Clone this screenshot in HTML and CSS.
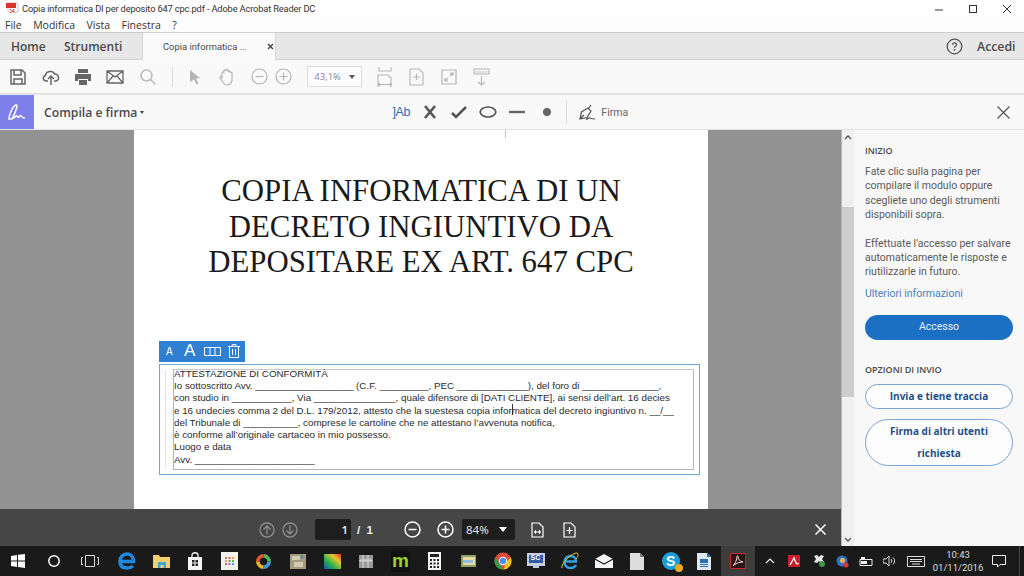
FILE: index.html
```html
<!DOCTYPE html>
<html lang="it">
<head>
<meta charset="utf-8">
<title>Copia informatica DI per deposito 647 cpc.pdf - Adobe Acrobat Reader DC</title>
<link rel="stylesheet" href="styles.css">
</head>
<body>
<div class="app">
  <header class="titlebar">
    <svg class="title-icon" width="14" height="14" viewBox="0 0 14 14"><path d="M2 0h8l2 2v8H2z" fill="#fff" stroke="#c9c9c9"/><path d="M0 1h10v5H0z" fill="#d8342a"/><path d="M4 7c2 1 3 3 5 3M8 7c-1 2-2 3-4 4" stroke="#d8342a" fill="none"/></svg>
    <span class="title-text">Copia informatica DI per deposito 647 cpc.pdf - Adobe Acrobat Reader DC</span>
    <div class="winbtns">
      <svg width="10" height="10" viewBox="0 0 10 10"><path d="M1 6h8" stroke="#333" stroke-width="1"/></svg>
      <svg width="10" height="10" viewBox="0 0 10 10"><rect x="1.5" y="1.5" width="7" height="7" fill="none" stroke="#333"/></svg>
      <svg width="10" height="10" viewBox="0 0 10 10"><path d="M1 1l8 8M9 1l-8 8" stroke="#333" stroke-width="1"/></svg>
    </div>
  </header>
  <nav class="menubar"><span>File</span><span>Modifica</span><span>Vista</span><span>Finestra</span><span>?</span></nav>
  <div class="tabs">
    <span class="tab-home">Home</span>
    <span class="tab-tools">Strumenti</span>
    <div class="tab-doc"><span>Copia informatica ...</span><svg width="7" height="7" viewBox="0 0 7 7"><path d="M1 1l5 5M6 1l-5 5" stroke="#444" stroke-width="1.4"/></svg></div>
    <svg class="help" width="17" height="17" viewBox="0 0 17 17"><circle cx="8.5" cy="8.5" r="7.3" fill="none" stroke="#555" stroke-width="1.3"/><path d="M6.6 6.8c0-2.5 3.9-2.5 3.9-.1 0 1.5-2 1.5-2 3" fill="none" stroke="#555" stroke-width="1.3"/><circle cx="8.5" cy="11.8" r=".9" fill="#555"/></svg>
    <span class="accedi">Accedi</span>
  </div>
  <div class="toolbar">
    <div class="tool"><svg width="18" height="18" viewBox="0 0 18 18" fill="none" stroke="#666" stroke-width="1.5"><path d="M2 2h11l3 3v11H2z"/><path d="M5 2v5h7V2M5 16v-5h8v5"/></svg></div>
    <div class="tool"><svg width="18" height="18" viewBox="0 0 18 18" fill="none" stroke="#666" stroke-width="1.5"><path d="M6 13H4.500C1 13 0 8.500 3.500 7.500 4 3 11 2 12.500 6c4-.5 6 6 1.500 7h-2"/><path d="M9 17V8M6 11l3-3 3 3"/></svg></div>
    <div class="tool"><svg width="18" height="18" viewBox="0 0 18 18"><path d="M4 1h10v4H4zM1 6h16v7h-3v-2H4v2H1zM5 12h8v5H5z" fill="#666"/></svg></div>
    <div class="tool"><svg width="18" height="14" viewBox="0 0 18 14" fill="none" stroke="#666" stroke-width="1.3"><path d="M1 1h16v12H1zM1 1l8 6 8-6M1 13l6-7M17 13l-6-7"/></svg></div>
    <div class="tool"><svg width="18" height="18" viewBox="0 0 18 18" fill="none" stroke="#bdbdbd" stroke-width="1.5"><circle cx="7.500" cy="7.500" r="5.500"/><path d="M11.500 11.500l5 5"/></svg></div>
    <div class="sep"></div>
    <div class="tool tool-a"><svg width="12" height="16" viewBox="0 0 12 16"><path d="M1 1l10 8-4 .5 2.500 5-2 1-2.500-5L1 13z" fill="#b5b5b5"/></svg></div>
    <div class="tool"><svg width="18" height="18" viewBox="0 0 18 18" fill="none" stroke="#b5b5b5" stroke-width="1.200"><path d="M4 11V5c0-1.500 2-1.500 2 0V3c0-1.500 2-1.500 2 0v-.500c0-1.500 2-1.500 2 0V4c0-1.500 2-1.500 2 0v1c0-1.200 2-1.200 2 0v6c0 4-2 6-5 6-2 0-3-1-4-2.500L2 10c-.800-1.500 1-2.500 2-1"/></svg></div>
    <div class="tool tool-z tool-z1"><svg width="17" height="17" viewBox="0 0 17 17" fill="none" stroke="#b5b5b5" stroke-width="1.200"><circle cx="8.500" cy="8.500" r="7.500"/><path d="M4.500 8.500h8"/></svg></div>
    <div class="tool tool-z"><svg width="17" height="17" viewBox="0 0 17 17" fill="none" stroke="#b5b5b5" stroke-width="1.200"><circle cx="8.500" cy="8.500" r="7.500"/><path d="M4.500 8.500h8M8.500 4.500v8"/></svg></div>
    <div class="zoombox"><span>43,1%</span><i class="caret"></i></div>
    <div class="tool tool-b"><svg width="16" height="20" viewBox="0 0 16 20" fill="none" stroke="#b5b5b5" stroke-width="1.100"><path d="M2 0v4h12V0M1 20v-12h10l3 3v9M3 16l-1.500 1.500L3 19M13 16l1.500 1.500L13 19M2 17.500h12"/></svg></div>
    <div class="tool"><svg width="15" height="18" viewBox="0 0 15 18" fill="none" stroke="#b5b5b5" stroke-width="1.100"><path d="M1 1h9l4 4v12H1z"/><path d="M4 9h7M7.500 6v6"/></svg></div>
    <div class="tool"><svg width="16" height="16" viewBox="0 0 16 16" fill="none" stroke="#b5b5b5" stroke-width="1.200"><path d="M1 1h14v14H1zM4 12l3-3M4 9v3h3M12 4L9 7M9 4h3v3"/></svg></div>
    <div class="tool"><svg width="17" height="18" viewBox="0 0 17 18" fill="none" stroke="#b5b5b5" stroke-width="1.100"><path d="M1 1h15v5H1zM4 3v2M7 3v2M10 3v2M13 3v2M8.500 8v9M5 14l3.500 3 3.500-3"/></svg></div>
  </div>
  <div class="fillbar">
    <div class="fill-badge"><svg width="20" height="18" viewBox="0 0 20 18" fill="none" stroke="#fff" stroke-width="1.500"><path d="M2 16c0-5 4-13 7-14 2-.500 1 4-4 14l-3 0zM6 15c2 0 3-3 4-2s1 2 2 1 1-2 2-1 1 2 4 2"/></svg></div>
    <span class="fill-name">Compila e firma</span><i class="mini-caret"></i>
    <div class="fill-tools">
      <span class="ab"><b>]</b>Ab</span>
      <span class="ft"><svg width="14" height="14" viewBox="0 0 14 14"><path d="M2 1l10 12M12 1L2 13" stroke="#555" stroke-width="2.600"/></svg></span>
      <span class="ft"><svg width="16" height="14" viewBox="0 0 16 14"><path d="M1 8l4 4L15 2" fill="none" stroke="#555" stroke-width="2.600"/></svg></span>
      <span class="ft"><svg width="18" height="12" viewBox="0 0 18 12"><ellipse cx="9" cy="6" rx="7.800" ry="5" fill="none" stroke="#555" stroke-width="1.700"/></svg></span>
      <span class="ft"><svg width="16" height="4" viewBox="0 0 16 4"><path d="M0 2h16" stroke="#666" stroke-width="2.400"/></svg></span>
      <span class="ft"><svg width="10" height="10" viewBox="0 0 10 10"><circle cx="5" cy="5" r="4" fill="#666"/></svg></span>
      <div class="sep sep-fill"></div>
      <svg width="18" height="17" viewBox="0 0 18 17" fill="none" stroke="#555" stroke-width="1.200"><path d="M2 15l1.500-7L10 4l3 3-4 6.500zM2 15l4-4M11 4l2-3M8 15c2 1 2-2 4-1s2 1 5 1"/></svg>
      <span class="firma">Firma</span>
    </div>
    <svg class="fill-close" width="13" height="13" viewBox="0 0 13 13"><path d="M.5.5l12 12M12.500.5l-12 12" stroke="#555" stroke-width="1.200"/></svg>
  </div>
  <main class="main">
    <section class="doc">
      <article class="page">
        <div class="page-tick"></div>
        <h1 class="doc-title">COPIA INFORMATICA DI UN<br>DECRETO INGIUNTIVO DA<br>DEPOSITARE EX ART. 647 CPC</h1>
        <div class="field-tools">
          <span class="ft-small">A</span><span class="ft-big">A</span>
          <svg width="17" height="9" viewBox="0 0 17 9" fill="none" stroke="#fff"><path d="M.5.500h16v8H.5zM6 .500v8M11 .500v8"/></svg>
          <svg width="12" height="14" viewBox="0 0 12 14" fill="none" stroke="#fff"><path d="M0 2.500h12M4 2.500V.700h4v1.800M1.500 2.500v11h9v-11M4.500 5v6M7.500 5v6"/></svg>
        </div>
        <div class="field">
          <div class="field-inner"><div class="field-text">ATTESTAZIONE DI CONFORMITÀ<br>Io sottoscritto Avv. __________________ (C.F. _________, PEC _____________), del foro di ______________,<br>con studio in ___________, Via _______________, quale difensore di [DATI CLIENTE], ai sensi dell’art. 16 decies<br>e 16 undecies comma 2 del D.L. 179/2012, attesto che la suestesa copia infor<span class="caretmark"></span>matica del decreto ingiuntivo n. __/__<br>del Tribunale di __________, comprese le cartoline che ne attestano l’avvenuta notifica,<br>è conforme all’originale cartaceo in mio possesso.<br>Luogo e data<br>Avv. ______________________</div></div>
        </div>
      </article>
      <div class="docbar">
        <svg class="nav-ic" width="16" height="16" viewBox="0 0 16 16" fill="none" stroke="#8d8d8d" stroke-width="1.300"><circle cx="8" cy="8" r="7"/><path d="M8 12.500V4M4.500 7.500L8 4l3.500 3.500"/></svg>
        <svg class="nav-ic nav-down" width="16" height="16" viewBox="0 0 16 16" fill="none" stroke="#8d8d8d" stroke-width="1.300"><circle cx="8" cy="8" r="7"/><path d="M8 3.500V12M4.500 8.500L8 12l3.500-3.500"/></svg>
        <div class="pagebox">1</div>
        <span class="pagecount">/ &nbsp;1</span>
        <svg class="z-minus" width="17" height="17" viewBox="0 0 17 17" fill="none" stroke="#fff" stroke-width="1.500"><circle cx="8.500" cy="8.500" r="7.500"/><path d="M4.500 8.500h8"/></svg>
        <svg class="z-plus" width="17" height="17" viewBox="0 0 17 17" fill="none" stroke="#fff" stroke-width="1.500"><circle cx="8.500" cy="8.500" r="7.500"/><path d="M4.500 8.500h8M8.500 4.500v8"/></svg>
        <div class="zoomdark"><span>84%</span><i class="caret caret-w"></i></div>
        <svg class="fit1" width="13" height="16" viewBox="0 0 13 16" fill="none" stroke="#fff" stroke-width="1.200"><path d="M1 1h7l4 4v10H1zM3.500 10h6M3.500 10l1.500-1.500M3.500 10l1.500 1.500M9.500 10L8 8.500M9.500 10L8 11.500"/></svg>
        <svg class="fit2" width="13" height="16" viewBox="0 0 13 16" fill="none" stroke="#fff" stroke-width="1.200"><path d="M1 1h7l4 4v10H1zM6.500 5v7M3.500 8.500h6"/></svg>
        <svg class="bar-close" width="11" height="11" viewBox="0 0 11 11"><path d="M.5.500l10 10M10.500.500l-10 10" stroke="#fff" stroke-width="1.500"/></svg>
      </div>
    </section>
    <div class="scroll">
      <svg class="sc-arrow" width="8" height="5" viewBox="0 0 8 5"><path d="M1 4l3-3 3 3" fill="none" stroke="#555" stroke-width="1.300"/></svg>
      <div class="sc-thumb"></div>
      <svg class="sc-arrow sc-bottom" width="8" height="5" viewBox="0 0 8 5"><path d="M1 1l3 3 3-3" fill="none" stroke="#555" stroke-width="1.300"/></svg>
    </div>
    <aside class="side">
      <h2 class="side-h">INIZIO</h2>
      <p class="side-p">Fate clic sulla pagina per compilare il modulo oppure scegliete uno degli strumenti disponibili sopra.</p>
      <p class="side-p side-p2">Effettuate l'accesso per salvare automaticamente le risposte e riutilizzarle in futuro.</p>
      <a class="side-link">Ulteriori informazioni</a>
      <div class="btn-primary">Accesso</div>
      <h2 class="side-h side-h2">OPZIONI DI INVIO</h2>
      <div class="btn-out">Invia e tiene traccia</div>
      <div class="btn-out btn-tall">Firma di altri utenti richiesta</div>
    </aside>
  </main>
  <footer class="taskbar">
    <div class="tb tb-w"><svg width="14" height="14" viewBox="0 0 14 14" fill="#fff"><path d="M0 2l6-1v5.500H0zM7 .800L14 0v6.500H7zM0 7.500h6V13l-6-1zM7 7.500h7V14l-7-1z"/></svg></div>
    <div class="tb tb-w"><svg width="14" height="14" viewBox="0 0 14 14"><circle cx="7" cy="7" r="5.200" fill="none" stroke="#fff" stroke-width="1.500"/></svg></div>
    <div class="tb tb-w"><svg width="18" height="12" viewBox="0 0 18 12" fill="none" stroke="#ddd"><path d="M4.500.500h9v11h-9zM2 2.500H.500v7H2M16 2.500h1.500v7H16"/></svg></div>
    <div class="tb"><svg width="18" height="18" viewBox="0 0 18 18" fill="none" stroke="#1f87dc" stroke-width="3.600"><path d="M3 9.500h12.500C15.500 4 12 2 9 2 5 2 2 5 2 9.500S5 16 9 16c2.500 0 4.500-.700 6-2"/></svg></div>
    <div class="tb"><svg width="17" height="14" viewBox="0 0 17 14"><path d="M0 1h6l1 2h10v11H0z" fill="#f3cf70"/><path d="M5 14V8h8v6h-2.500v-3h-3v3z" fill="#3ba4dd"/></svg></div>
    <div class="tb"><svg width="16" height="18" viewBox="0 0 16 18"><path d="M1 5h14v13H1z" fill="#f5f5f5"/><path d="M5 5V3c0-3 6-3 6 0v2" fill="none" stroke="#f5f5f5" stroke-width="1.300"/><path d="M5 8h2.500v2.500H5zM8.500 8H11v2.500H8.500zM5 11.500h2.500V14H5zM8.500 11.500H11V14H8.500z" fill="#222"/></svg></div>
    <div class="tb"><svg width="17" height="18" viewBox="0 0 17 18"><path d="M0 0h17v18H0z" fill="#f4f0ec"/><path d="M4 5h2v2H4zM7.500 5h2v2h-2z" fill="#e05a5a"/><path d="M11 5h2v2h-2zM4 8h2v2H4z" fill="#e5a13c"/><path d="M7.500 8h2v2h-2zM11 8h2v2h-2z" fill="#5bb35b"/><path d="M4 11h2v2H4zM7.500 11h2v2h-2z" fill="#d0568f"/><path d="M11 11h2v2h-2z" fill="#4c9be0"/></svg></div>
    <div class="tb"><svg width="15" height="15" viewBox="0 0 16 16" fill="none" stroke-width="4"><path d="M8 2a6 6 0 0 0-6 6" stroke="#e2572b"/><path d="M2 8a6 6 0 0 0 6 6" stroke="#e5b52b"/><path d="M8 14a6 6 0 0 0 6-6" stroke="#3d9ad8"/><path d="M14 8a6 6 0 0 0-6-6" stroke="#55b05a"/></svg></div>
    <div class="tb"><svg width="16" height="17" viewBox="0 0 16 17"><path d="M0 1h16v15H0z" fill="#a39a7f"/><path d="M2 3h8v4H2zM4 9h9v5H4z" fill="#d1cbb3"/><circle cx="12" cy="4" r="2" fill="#6c8a9c"/></svg></div>
    <div class="tb"><svg width="17" height="15" viewBox="0 0 17 15"><defs><linearGradient id="rb" x1="0" y1="1" x2="1" y2="0"><stop offset="0" stop-color="#1d4fc4"/><stop offset=".35" stop-color="#24b24a"/><stop offset=".7" stop-color="#e6c72c"/><stop offset="1" stop-color="#e02b2b"/></linearGradient></defs><path d="M0 0h17v15H0z" fill="url(#rb)"/></svg></div>
    <div class="tb"><svg width="14" height="13" viewBox="0 0 14 13"><path d="M0 0h14v13H0z" fill="#9a9a9a"/><path d="M1 5h12v1H1zM4 0v13M9 0v13" stroke="#d8d8d8" fill="none"/></svg></div>
    <div class="tb"><span class="m-ic">m</span></div>
    <div class="tb"><svg width="13" height="18" viewBox="0 0 13 18"><path d="M0 0h13v18H0z" fill="#f4f4f4"/><path d="M2 2h9v3H2zM2 7h2v2H2zM5.500 7h2v2h-2zM9 7h2v2H9zM2 10.500h2v2H2zM5.500 10.500h2v2h-2zM9 10.500h2v2H9zM2 14h2v2H2zM5.500 14h2v2h-2zM9 14h2v2H9z" fill="#222"/></svg></div>
    <div class="tb"><svg width="17" height="14" viewBox="0 0 17 14"><path d="M1 1h15v12H1z" fill="#8fa066"/><path d="M3 3h12v8H3z" fill="#e8d9a2"/><path d="M3 6h10v3H3z" fill="#8fc0d8"/></svg></div>
    <div class="tb"><svg width="18" height="18" viewBox="0 0 18 18"><circle cx="9" cy="9" r="8.500" fill="#dd4b39"/><path d="M16.500 5a8.500 8.500 0 0 1-7 12.500L12.500 10z" fill="#f4c20d"/><path d="M9.500 17.500A8.500 8.500 0 0 1 1.500 5l4 7z" fill="#3a9b4f"/><circle cx="9" cy="9" r="4.200" fill="#fff"/><circle cx="9" cy="9" r="3.200" fill="#4a8fe7"/></svg></div>
    <div class="tb"><svg width="18" height="16" viewBox="0 0 18 16"><path d="M0 0h18v13H0z" fill="#c5cde0"/><path d="M2 2h14v8H2z" fill="#2f5aa8"/><path d="M6 13h6v2H6z" fill="#c5cde0"/></svg><span class="sc-ic">SC</span></div>
    <div class="tb"><svg width="18" height="18" viewBox="0 0 18 18" fill="none"><path d="M4 9.500h11C15 6 12.500 4 9.500 4 6 4 3.500 6.500 3.500 10S6 16 9.500 16c2.500 0 4.500-1 5.500-3" stroke="#2ba4e0" stroke-width="2.500"/><path d="M1 16C-1 12 12 0 16 1c2 .500 1 4-1 6" stroke="#e7c62f" stroke-width="1"/></svg></div>
    <div class="tb"><svg width="18" height="14" viewBox="0 0 18 14"><path d="M0 5l9-5 9 5v9H0z" fill="#f4f4f4"/><path d="M0 5l9 5 9-5" fill="none" stroke="#222" stroke-width="1.200"/></svg></div>
    <div class="tb"><svg width="14" height="17" viewBox="0 0 14 17"><path d="M0 0h10l4 4v13H0z" fill="#ddd"/><path d="M10 0v4h4z" fill="#777"/></svg></div>
    <div class="tb"><span class="sky">S<i></i></span></div>
    <div class="tb"><svg width="14" height="17" viewBox="0 0 14 17"><path d="M0 0h10l4 4v13H0z" fill="#dfe9f5"/><path d="M10 0v4h4z" fill="#2a6fb5"/><path d="M3 6h8v4H3z" fill="#2a6fb5"/><path d="M3 11.500h8M3 13.500h8" stroke="#2a6fb5"/></svg></div>
    <div class="tb tb-active"><svg width="16" height="16" viewBox="0 0 16 16"><path d="M.5.500h15v15H.5z" fill="#2a1512" stroke="#c3262c"/><path d="M3 12.500c2-1 4-6 4-9 0-1 1-1 1 0 0 3 2 5 5 5.500-3 0-6 1-8 2.500z" fill="none" stroke="#e9e2e0"/></svg></div>
    <div class="tray">
      <svg class="tr-chev" width="10" height="6" viewBox="0 0 10 6"><path d="M1 5l4-4 4 4" fill="none" stroke="#eee" stroke-width="1.200"/></svg>
      <svg class="tr-a" width="12" height="12" viewBox="0 0 12 12"><path d="M0 0h12v12H0z" fill="#c8202a"/><path d="M2 10L6 3l2 5c1 1 2 1 2.500 0" fill="none" stroke="#fff" stroke-width="1.300"/></svg>
      <svg class="tr-b" width="12" height="12" viewBox="0 0 12 12"><path d="M1 1l3-1 2 2 2-2 3 1-2 3 2 3-3 1-2-2-2 2-3-1 2-3z" fill="#e8e8e8"/><circle cx="9" cy="9" r="3" fill="#3c9a46"/></svg>
      <svg class="tr-b" width="13" height="13" viewBox="0 0 13 13"><circle cx="6" cy="6" r="5.500" fill="#2e73bf"/><circle cx="6.500" cy="5.500" r="2.500" fill="#f2b453"/><circle cx="10" cy="10" r="2.500" fill="#d33"/></svg>
      <svg class="tr-c" width="14" height="9" viewBox="0 0 14 9"><path d="M1 2.500h12v6H1z" fill="none" stroke="#eee"/><path d="M2 0h4v2H2zM2 4h6v3H2z" fill="#eee"/></svg>
      <svg class="tr-d" width="13" height="12" viewBox="0 0 13 12"><path d="M0 4h3l3-3v10L3 8H0z" fill="none" stroke="#ddd"/><path d="M8 4c1 1 1 3 0 4M10 2.500c2 2 2 5 0 7" fill="none" stroke="#ddd"/></svg>
      <svg class="tr-kb" width="18" height="11" viewBox="0 0 18 11"><path d="M.5.500h17v10H.5z" fill="none" stroke="#ddd"/><path d="M3 3.500h12M3 5.500h12M5 8h8" stroke="#ddd"/></svg>
      <div class="clock"><span>10:43</span><span>01/11/2016</span></div>
      <svg class="tr-note" width="14" height="13" viewBox="0 0 14 13"><path d="M.5.500h13v9H8l-2.500 2.500V9.500h-5z" fill="none" stroke="#eee"/></svg>
      <div class="show-desk"></div>
    </div>
  </footer>
</div>
</body>
</html>
```
FILE: styles.css
```css
* { box-sizing: border-box; }
html, body { margin: 0; padding: 0; }
body { width: 1024px; height: 576px; overflow: hidden; font-family: "Open Sans", "Liberation Sans", sans-serif; background: #fff; }
.app { display: flex; flex-direction: column; width: 1024px; height: 576px; }
svg { display: block; flex: none; }

.titlebar { height: 17px; display: flex; align-items: center; background: #fff; padding-left: 6px; font: 9.300px "Roboto", sans-serif; letter-spacing: -.160px; color: #333; }
.title-icon { margin-right: 2px; }
.title-text { white-space: nowrap; }
.winbtns { margin-left: auto; display: flex; gap: 24px; padding-right: 12px; }

.menubar { height: 15px; display: flex; align-items: center; background: #fdfdfd; padding-left: 5px; gap: 11.500px; font-size: 10.500px; color: #333; }

.tabs { height: 28px; display: flex; align-items: center; background: #e7e7e7; border-top: 1px solid #cfcfcf; border-bottom: 1px solid #d0d0d0; color: #4a4a4a; font-size: 12px; font-weight: 600; }
.tab-home { margin-left: 11px; width: 53px; }
.tab-tools { width: 78px; }
.tab-doc { align-self: stretch; margin-bottom: -1px; width: 134px; background: #fafafa; display: flex; align-items: center; padding-left: 20px; font: 400 9.400px "Roboto", sans-serif; white-space: nowrap; border-left: 1px solid #d4d4d4; border-right: 1px solid #d4d4d4; }
.tab-doc svg { margin-left: 20px; }
.help { margin-left: auto; margin-right: 14px; }
.accedi { margin-right: 8px; width: 39px; font-size: 12.300px; white-space: nowrap; }

.toolbar { height: 35px; display: flex; align-items: center; background: #f9f9f9; border-bottom: 2px solid #e3e3e3; padding-left: 2px; }
.tool { width: 32.400px; display: flex; justify-content: center; }
.tool-a { width: 33px; margin-right: -1px; }
.tool-z { width: 24px; }
.tool-z1 { margin-left: 4px; }
.tool-b { margin-left: 6px; }
.sep { width: 1px; height: 20px; background: #dcdcdc; margin: 0 6px 0 8px; }
.zoombox { margin-left: 12px; width: 55px; height: 21px; background: #fdfdfd; border: 1px solid #dcdcdc; display: flex; align-items: center; justify-content: space-between; padding: 0 6px; font-size: 9.500px; color: #8a8a8a; }
.caret { width: 0; height: 0; border-left: 3.500px solid transparent; border-right: 3.500px solid transparent; border-top: 4px solid #555; }
.caret-w { border-left-width: 4.500px; border-right-width: 4.500px; border-top: 5px solid #fff; }

.fillbar { height: 35px; display: flex; align-items: center; background: #f9f9f9; border-bottom: 1px solid #e2e2e2; color: #4a4a4a; }
.fill-badge { width: 34px; height: 34px; background: #7f7fe9; display: flex; align-items: center; justify-content: center; }
.fill-name { margin-left: 10px; font-size: 12.200px; font-weight: 600; }
.mini-caret { margin-left: 3px; width: 0; height: 0; border-left: 2.500px solid transparent; border-right: 2.500px solid transparent; border-top: 3px solid #444; }
.fill-tools { margin-left: 248px; display: flex; align-items: center; width: 238px; }
.ab { width: 22.500px; font-family: "Liberation Sans", sans-serif; font-size: 12.500px; color: #2c6eb5; letter-spacing: -.300px; white-space: nowrap; }
.ab b { font-weight: 400; }
.ft { width: 29.300px; display: flex; justify-content: center; }
.sep-fill { height: 24px; margin: 0 11px 0 5px; }
.firma { margin-left: 5px; font: 10.500px "Roboto", sans-serif; color: #666; }
.fill-close { margin-left: auto; margin-right: 14px; }

.main { flex: 1; min-height: 0; display: grid; grid-template-columns: 841px 13px 170px; }
.doc { position: relative; background: #929292; padding-left: 134px; overflow: hidden; }
.page { position: relative; width: 574px; height: 416px; background: #fff; padding: 44px 25px 0; }
.page-tick { position: absolute; left: 371px; top: 0; width: 1px; height: 8px; background: #c6c6c6; }
.doc-title { margin: 0; text-align: center; font: 400 30.800px/35.500px "Liberation Serif", serif; color: #1a1a1a; width: 524px; }
.field-tools { margin-top: 60px; width: 86px; height: 21px; background: #2f80d3; display: flex; align-items: center; padding-left: 7px; color: #fff; font-family: "Liberation Sans", sans-serif; }
.ft-small { font-size: 10px; width: 18px; }
.ft-big { font-size: 17px; width: 20px; }
.field-tools svg:last-child { margin-left: 7px; }
.field { position: relative; margin-top: 2px; width: 541px; height: 111px; border: 1px solid #6da6d4; padding: 4px 5px 4px 13px; }
.field::before { content: ""; position: absolute; left: 5px; top: 6px; bottom: 6px; border-left: 1px dotted #cfcfcf; }
.field-inner { height: 101px; border: 1px solid #b5b5b5; border-top-color: #c6c6c6; }
.field-text { margin-top: -2px; font: 400 9.800px/12.150px "Liberation Sans", sans-serif; color: #2a2a2a; white-space: nowrap; }
.caretmark { display: inline-block; width: 1px; height: 11px; background: #333; vertical-align: -1px; margin-right: -1px; }

.docbar { position: absolute; left: 0; right: 0; bottom: 0; height: 37px; background: #464646; display: flex; align-items: center; padding-top: 4px; color: #eee; font-size: 11.500px; }
.nav-ic { margin-left: 259px; }
.nav-down { margin-left: 7px; }
.pagebox { margin-left: 17px; width: 36px; height: 21px; background: #1e1e1e; border-radius: 2px; text-align: right; padding-right: 3px; line-height: 21px; font-weight: 600; }
.pagecount { margin-left: 6px; width: 33px; font-weight: 600; font-family: "Liberation Sans", sans-serif; }
.z-minus { margin-left: 14px; }
.z-plus { margin-left: 16px; }
.zoomdark { margin-left: 8px; width: 53px; height: 21px; background: #1e1e1e; border-radius: 2px; display: flex; align-items: center; justify-content: space-between; padding: 0 8px 0 4px; }
.fit1 { margin-left: 16px; }
.fit2 { margin-left: 19px; }
.bar-close { margin-left: 239px; }

.scroll { display: flex; flex-direction: column; align-items: center; background: #f0f0f0; border-left: 1px solid #b8b8b8; padding-top: 5px; }
.sc-thumb { width: 100%; height: 190px; margin-top: 67px; background: #cdcdcd; }
.sc-bottom { margin-top: auto; margin-bottom: 4px; }

.side { background: #f8f8f8; padding: 15px 11px 0; color: #5a5a5a; font: 10.500px "Roboto", sans-serif; }
.side-h { margin: 0; font: 600 9px/12px "Open Sans", sans-serif; color: #4a4a4a; }
.side-p { margin: 8px 0 0; line-height: 14.400px; width: 146px; }
.side-p2 { margin-top: 14px; }
.side-link { display: block; margin-top: 7px; line-height: 14px; color: #4a80bb; }
.btn-primary { margin-top: 14px; width: 148px; height: 25px; border-radius: 13px; background: #1c70c4; color: #e8f0f8; text-align: center; line-height: 24px; font-size: 10.500px; }
.side-h2 { margin-top: 24px; }
.btn-out { margin-top: 8px; width: 148px; height: 25px; border: 1.500px solid #7ba4d6; border-radius: 13px; background: #fdfdfd; color: #1f4f87; text-align: center; font: 700 10px/22px "Open Sans", sans-serif; }
.btn-tall { margin-top: 10px; height: 47px; border-radius: 24px; padding: 0 20px; }

.taskbar { height: 30px; background: #1a1a1a; display: flex; align-items: center; }
.tb { width: 34.200px; height: 30px; display: flex; align-items: center; justify-content: center; position: relative; flex: none; }
.tb-w { width: 36px; }
.tb:nth-child(4) { margin-left: 1.900px; }
.tb:nth-child(n+15) { width: 33.600px; }
.tb-active { background: #3d3d3d; }
.m-ic { font: 700 19px/1 "Liberation Sans", sans-serif; color: #9ad227; background: #111; padding: 0 1px 2px; }
.sc-ic { position: absolute; left: 11px; top: 8px; font: 700 7px/1 "Liberation Sans", sans-serif; color: #fff; }
.sky { position: relative; width: 18px; height: 18px; border-radius: 50%; background: #1ba0dc; color: #fff; font: 700 14px/18px "Liberation Sans", sans-serif; text-align: center; }
.sky i { position: absolute; right: -3px; bottom: -2px; width: 8px; height: 8px; border-radius: 50%; background: #eda91f; }
.tray { margin-left: auto; display: flex; align-items: center; height: 30px; color: #ddd; }
.tr-chev { margin-right: 13px; }
.tr-a { margin-right: 13px; }
.tr-b { margin-right: 10.500px; }
.tr-c { margin-right: 9.500px; }
.tr-d { margin-right: 11.500px; }
.tr-kb { margin-right: 5px; }
.clock { width: 56px; display: flex; flex-direction: column; align-items: center; font: 9.500px/13px "Roboto", sans-serif; margin-right: 6px; }
.show-desk { width: 1px; height: 30px; background: #444; margin: 0 4px 0 13px; }
```
